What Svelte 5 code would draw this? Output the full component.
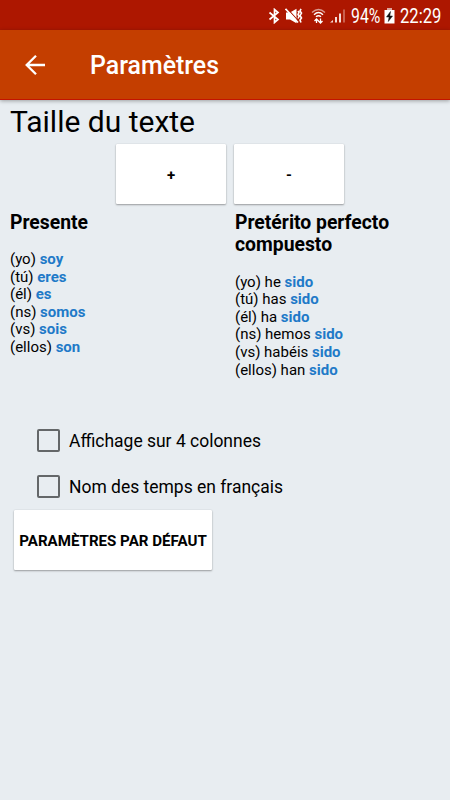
<script>
  const tenses = [
    { name: 'Presente', forms: [['(yo)', 'soy'], ['(tú)', 'eres'], ['(él)', 'es'], ['(ns)', 'somos'], ['(vs)', 'sois'], ['(ellos)', 'son']] },
    { name: 'Pretérito perfecto compuesto', forms: [['(yo) he', 'sido'], ['(tú) has', 'sido'], ['(él) ha', 'sido'], ['(ns) hemos', 'sido'], ['(vs) habéis', 'sido'], ['(ellos) han', 'sido']] }
  ];
  const options = ['Affichage sur 4 colonnes', 'Nom des temps en français'];
</script>

<div class="screen">
  <div class="status">
    <svg class="bt" width="12" height="16" viewBox="0 0 12 16" fill="none" stroke="#fff" stroke-width="1.7"><path d="M1.500 4.500 10 11.500 6.500 14.500V1.500L10 4.500 1.500 11.500" /></svg>
    <svg class="mute" width="18" height="16" viewBox="0 0 18 16"><path d="M1 4.500h4L11.500.7v14.600L5 11.500H1z" fill="#fff" /><path d="M2 .3 13 12.500" stroke="#ad1700" stroke-width="1.100" /><path d="M.5.8 13 14.500" stroke="#fff" stroke-width="1.700" /><path d="m13 3 1 1.500-1 2 1 2-1 2M16 .8l-1 2.200 1.500 2-1.500 2.500 1.500 2.500-1.500 2 1 2.500" fill="none" stroke="#fff" stroke-width="1.600" /></svg>
    <svg class="wifi" width="15" height="16" viewBox="0 0 15 16" fill="none"><path d="M1 4.500Q7.500-1.500 14 4.500" stroke="#d99a90" stroke-width="1.300" /><path d="M3 6.700Q7.500 2.500 12 6.700M5 8.800Q7.500 6.500 10 8.800" stroke="#fff" stroke-width="1.400" /><path d="M5.500 15v-4M3.500 13l2-2 2 2M9.500 10.500V15M7.500 13l2 2 2-2" stroke="#fff" stroke-width="1.300" /></svg>
    <svg class="signal" width="16" height="16" viewBox="0 0 16 16"><path d="M0 14.500 3 12v2.500zM5 9h2v5.500H5zM9 5.500h2v9H9z" fill="#f5dcd7" /><path d="M13 1.500h2v13h-2z" fill="#c9604f" /></svg>
    <span class="pct"><span>94%</span></span>
    <svg class="battery" width="11" height="16" viewBox="0 0 11 16"><path d="M3 0h5v2h-5z" fill="#dda69d" /><path d="M.5 2h10v13.500H.5z" fill="#fff" /><path d="M6.500 3.500 2.500 9h2.600l-.8 4.500L8.500 8H5.800z" fill="#101010" stroke="#101010" stroke-width=".5" /></svg>
    <span class="time"><span>22:29</span></span>
  </div>
  <header>
    <svg width="22" height="22" viewBox="0 0 22 22" fill="none" stroke="#fff" stroke-width="2.300"><path d="M21 11H3M12 1.700 2.700 11l9.300 9.300" /></svg>
    <h1>Paramètres</h1>
  </header>
  <main>
    <h2>Taille du texte</h2>
    <div class="sizes"><button>+</button><button>-</button></div>
    <div class="tenses">
      {#each tenses as tense}
        <section>
          <h3>{tense.name}</h3>
          {#each tense.forms as [subject, verb]}
            <p>{subject} <b>{verb}</b></p>
          {/each}
        </section>
      {/each}
    </div>
    <div class="options">
      {#each options as option}
        <label><input type="checkbox" /><span>{option}</span></label>
      {/each}
    </div>
    <button class="reset">PARAMÈTRES PAR DÉFAUT</button>
  </main>
</div>

<style>
  .screen { width: 450px; height: 800px; background: #e8edf1; font-family: Roboto, sans-serif; color: #000; overflow: hidden; }
  .status { height: 30px; box-sizing: border-box; background: #ad1700; color: #fff; display: flex; align-items: center; padding-top: 2px; padding-left: 268px; font-size: 19.500px; white-space: nowrap; }
  .status svg { flex: none; }
  .status span span { display: inline-block; transform-origin: left center; }
  .mute { margin-left: 5px; }
  .wifi { margin-left: 8px; }
  .signal { margin-left: 4px; }
  .pct { width: 30px; margin-left: 5px; }
  .pct span { transform: scaleX(.81); }
  .battery { margin-left: 3px; }
  .time { width: 42px; margin-left: 4.500px; }
  .time span { transform: scaleX(.85); }
  header { height: 70px; box-sizing: border-box; border-bottom: 1px solid #c31300; background: #c43e00; display: flex; align-items: center; padding-left: 24px; position: relative; box-shadow: 0 1px 4px #0005; }
  h1 { margin: 3px 0 0 44px; font-size: 24.900px; font-weight: 500; line-height: 30px; color: #fff; }
  h2 { margin: 0; padding: 4px 10px 0; font-size: 30px; font-weight: 400; line-height: 36px; height: 40px; box-sizing: border-box; }
  .sizes { display: flex; justify-content: center; gap: 8px; margin-top: 4px; padding-left: 10px; }
  button { width: 110px; height: 60px; box-sizing: border-box; padding: 1px 0 0; background: #fff; border: 0; border-radius: 1px; box-shadow: 0 1px 2px #0005, 0 0 1px #0003; font: 700 15px Roboto, sans-serif; color: #000; }
  .tenses { display: flex; padding-left: 10px; margin-top: 7.500px; height: 205.500px; }
  section { flex: 0 0 225px; }
  h3 { width: 190px; margin: 0 0 17px; font-size: 19.350px; line-height: 22.600px; font-weight: 700; }
  p { margin: 0; font-size: 15px; line-height: 17.580px; }
  b { color: #1f7ac8; font-weight: 700; }
  .options label { display: flex; align-items: center; height: 46.500px; padding-left: 37px; font-size: 17.480px; }
  .options span { padding-top: 1px; }
  input { appearance: none; width: 23px; height: 23px; margin: 0 9px 0 0; border: 2px solid #646769; border-radius: 2px; box-sizing: border-box; }
  .reset { display: block; width: 198px; margin: 0 0 0 14px; padding: 2px 0 0; font-size: 15.100px; white-space: nowrap; }
</style>
